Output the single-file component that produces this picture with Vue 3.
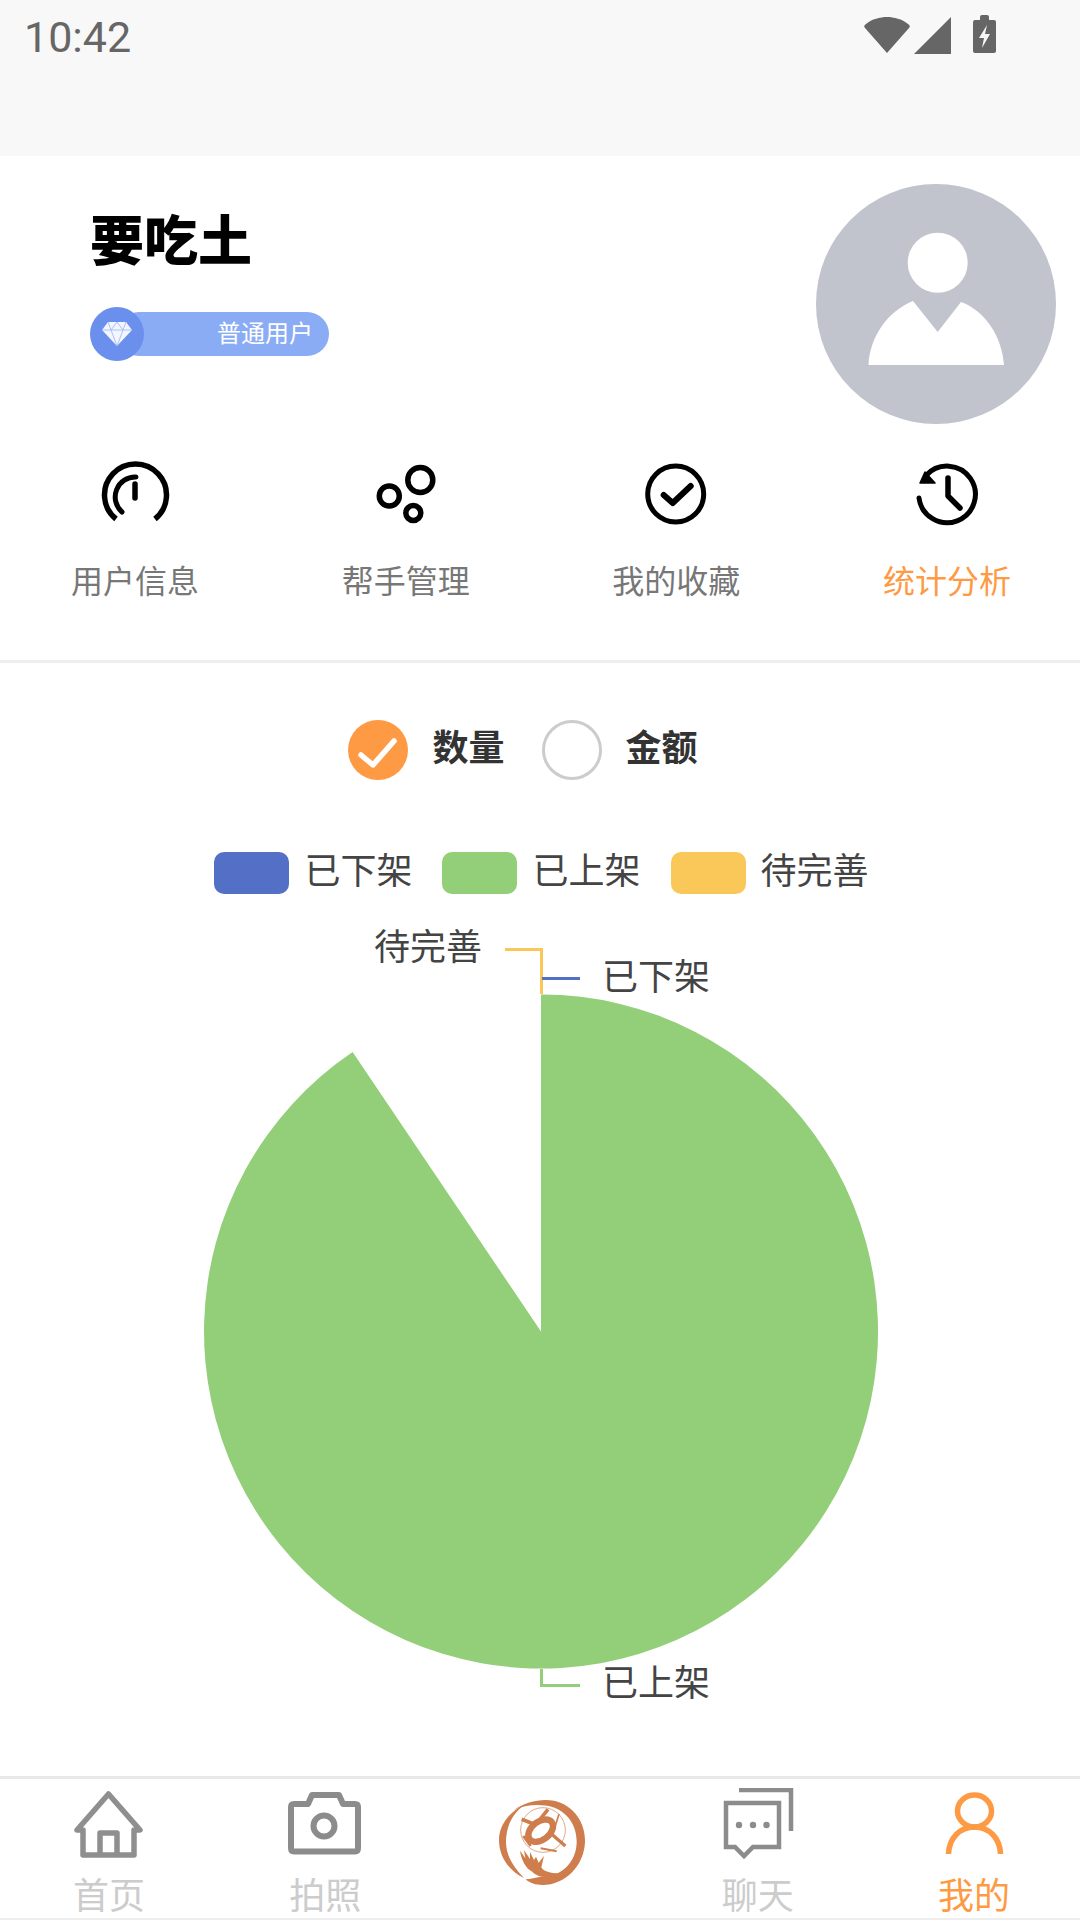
<script setup>
const legend = [
  { name: "已下架", color: "#5470c6" },
  { name: "已上架", color: "#93ce78" },
  { name: "待完善", color: "#fac858" },
];
</script>

<template>
  <div class="page">
    <div class="status-bar">
      <span class="time">10:42</span>
      <svg class="status-icons" viewBox="860 10 140 48" width="140" height="48">
        <path d="M887 53L865 28Q863 26 866 24C872 19 880 17 887 17C894 17 902 19 908 24Q911 26 909 28Z" fill="#666" />
        <path d="M914 54L951 17V54Z" fill="#666" />
        <path d="M980 20V17Q980 15 982 15H987Q989 15 989 17V20H994Q996 20 996 22V51Q996 53 994 53H975Q973 53 973 51V22Q973 20 975 20Z" fill="#666" />
        <path d="M987 25L979 38H984L982 48L990 34H985Z" fill="#f8f8f8" />
      </svg>
    </div>

    <div class="profile">
      <div class="profile-info">
        <div class="name">要吃土</div>
        <div class="badge">
          <div class="badge-icon">
            <svg viewBox="0 0 32 26" width="32" height="26">
              <path d="M7 1H25L31 9L16 25L1 9Z" fill="#fff" opacity="0.92" />
              <path d="M1 9H31M10 9L16 25L22 9L16 1L10 9M7 1L10 9M25 1L22 9" fill="none" stroke="#a9c0f5" stroke-width="1" />
            </svg>
          </div>
          <div class="badge-label">普通用户</div>
        </div>
      </div>
      <svg class="avatar" viewBox="816 183 240 240" width="240" height="240">
        <circle cx="936" cy="303" r="120" fill="#c1c4cc" />
        <circle cx="937.700" cy="261.700" r="30" fill="#fff" />
        <path d="M868.500 364C870 335 888 310 913 300L937.700 331L961 301C985 310 1002 335 1004 364Z" fill="#fff" />
      </svg>
    </div>

    <div class="menu">
      <div class="menu-item">
        <svg viewBox="95 458 80 72" width="80" height="72" fill="none" stroke="#000" stroke-linecap="round">
          <path d="M116 518A31 31 0 1 1 155 518" stroke-width="5.500" stroke-linecap="butt" />
          <path d="M122 511A20 20 0 0 1 136 476" stroke-width="5" />
          <path d="M135 483V497" stroke-width="5.500" />
        </svg>
        <span>用户信息</span>
      </div>
      <div class="menu-item">
        <svg viewBox="365.700 458 80 72" width="80" height="72" fill="none" stroke="#000" stroke-width="5.500">
          <circle cx="420" cy="479" r="12.500" />
          <circle cx="389" cy="495" r="10" />
          <circle cx="413" cy="512" r="7.500" />
        </svg>
        <span>帮手管理</span>
      </div>
      <div class="menu-item">
        <svg viewBox="636.300 458 80 72" width="80" height="72" fill="none" stroke="#000" stroke-width="5" stroke-linecap="round" stroke-linejoin="round">
          <circle cx="676" cy="493" r="28" />
          <path d="M664 494L673 502L691 485" stroke-width="6" />
        </svg>
        <span>我的收藏</span>
      </div>
      <div class="menu-item active">
        <svg viewBox="907 458 80 72" width="80" height="72" fill="none" stroke="#000" stroke-width="5" stroke-linecap="round" stroke-linejoin="round">
          <path d="M919 497A28.300 28.300 0 1 0 926 474.500" />
          <path d="M920 482L925 471L935 482Z" fill="#000" stroke-width="1.500" />
          <path d="M948 477V495L960 507" stroke-width="5.500" />
        </svg>
        <span>统计分析</span>
      </div>
    </div>

    <div class="filters">
      <div class="filter">
        <svg viewBox="0 0 60 60" width="60" height="60">
          <circle cx="30" cy="30" r="30" fill="#fd9a43" />
          <path d="M13 35L25 45L46 21" fill="none" stroke="#fff" stroke-width="5.500" stroke-linecap="round" stroke-linejoin="round" />
        </svg>
        <span>数量</span>
      </div>
      <div class="filter">
        <svg viewBox="0 0 60 60" width="60" height="60">
          <circle cx="30" cy="30" r="28.500" fill="#fff" stroke="#ccc" stroke-width="3" />
        </svg>
        <span>金额</span>
      </div>
    </div>

    <div class="legend">
      <div v-for="item in legend" :key="item.name" class="legend-item">
        <i class="swatch" :style="{ background: item.color }"></i>
        <span>{{ item.name }}</span>
      </div>
    </div>

    <svg class="chart" viewBox="0 894 1080 882" width="1080" height="882">
      <path d="M541 1331.500L541 994.500A337 337 0 1 1 352.600 1052.100Z" fill="#93ce78" />
      <path d="M505 949.500H541.500V994" fill="none" stroke="#fac858" stroke-width="3" />
      <path d="M542 978.500H580" fill="none" stroke="#5470c6" stroke-width="3" />
      <path d="M541.500 1669V1685.500H580" fill="none" stroke="#93ce78" stroke-width="3" />
      <text x="374" y="960">待完善</text>
      <text x="602" y="990">已下架</text>
      <text x="602" y="1696">已上架</text>
    </svg>

    <div class="tabbar">
      <div class="tab">
        <svg viewBox="69 1788 80 72" width="80" height="72" fill="none" stroke="#8f8f8f" stroke-width="5.500" stroke-linejoin="round">
          <path d="M83 1855V1830H77L108.500 1794L140 1830H134V1855Z" />
          <path d="M100 1855V1833H117V1855" />
        </svg>
        <span>首页</span>
      </div>
      <div class="tab">
        <svg viewBox="285 1788 80 72" width="80" height="72" fill="none" stroke="#8c8c8c" stroke-width="6" stroke-linejoin="round">
          <path d="M294 1804H308L312 1795H339L343 1804H355Q358 1804 358 1807V1848Q358 1851.500 355 1851.500H294Q291 1851.500 291 1848V1807Q291 1804 294 1804Z" />
          <circle cx="324" cy="1826" r="10.500" />
        </svg>
        <span>拍照</span>
      </div>
      <div class="tab logo-tab">
        <svg viewBox="4 0 300 300" width="100" height="100" fill="#cf7d4c">
          <path d="M70 60C105 35 150 25 190 32C250 45 285 100 283 155C281 225 225 285 155 285C135 285 118 280 105 268C120 268 135 262 150 260C212 263 258 215 258 155C258 100 225 58 170 47C135 42 100 45 70 60Z" />
          <path d="M105 42C55 65 25 105 25 150C25 195 50 240 100 264C78 240 46 205 46 155C46 110 65 70 105 42Z" />
          <circle cx="157" cy="120" r="67" fill="none" stroke="#cf7d4c" stroke-width="2" />
          <g fill="none" stroke="#cf7d4c">
            <ellipse cx="150" cy="122" rx="42" ry="27" transform="rotate(-38 150 122)" stroke-width="19" />
            <path d="M93 88L135 104" stroke-width="11" />
            <path d="M172 58L148 88" stroke-width="11" />
            <path d="M180 130L224 168" stroke-width="10" />
            <path d="M120 168L98 138" stroke-width="8" />
            <path d="M150 175L198 184" stroke-width="6" />
            <path d="M205 72L190 120" stroke-width="5" />
          </g>
          <path d="M88 182L104 205L100 180L118 207L118 186L130 210L136 200L144 218L160 198L152 232C158 245 180 250 205 250C175 268 140 262 125 245C105 235 92 210 88 182Z" />
        </svg>
      </div>
      <div class="tab">
        <svg viewBox="717 1788 80 72" width="80" height="72" fill="none" stroke="#8c8c8c" stroke-width="4.500">
          <path d="M738 1790H790V1831" />
          <path d="M725 1803H778V1847H752L743 1856L734 1847H725Z" />
          <g fill="#8c8c8c" stroke="none">
            <circle cx="738" cy="1825" r="3.200" />
            <circle cx="752" cy="1825" r="3.200" />
            <circle cx="765.500" cy="1825" r="3.200" />
          </g>
        </svg>
        <span>聊天</span>
      </div>
      <div class="tab active">
        <svg viewBox="934 1788 80 72" width="80" height="72" fill="none" stroke="#fd9a43" stroke-width="5.500">
          <ellipse cx="974.500" cy="1811" rx="17" ry="16" />
          <path d="M948.500 1854C949 1838 960 1827 974.500 1827C989 1827 1000 1838 1000.500 1854" />
        </svg>
        <span>我的</span>
      </div>
    </div>
  </div>
</template>

<style scoped>
.page {
  width: 1080px;
  height: 1920px;
  overflow: hidden;
  background: #fff;
  display: flex;
  flex-direction: column;
  font-family: "Noto Sans CJK SC", "Noto Sans", sans-serif;
}

.status-bar {
  height: 156px;
  flex: none;
  background: #f8f8f8;
  position: relative;
  padding-left: 24px;
  box-sizing: border-box;
}

.time {
  display: block;
  font-family: Roboto, sans-serif;
  font-size: 43px;
  line-height: 74px;
  color: #666;
}

.status-icons {
  position: absolute;
  left: 860px;
  top: 10px;
}

.profile {
  height: 304px;
  flex: none;
  display: flex;
  justify-content: space-between;
  box-sizing: border-box;
  padding: 28px 24px 0 90px;
}

.name {
  font-size: 54px;
  font-weight: 900;
  line-height: 60px;
  color: #000;
  margin: 24px 0 39px 0;
}

.badge {
  display: flex;
  align-items: center;
  width: 239px;
}

.badge-icon {
  width: 54px;
  height: 54px;
  flex: none;
  border-radius: 50%;
  background: #6a8fec;
  display: flex;
  align-items: center;
  justify-content: center;
  position: relative;
}

.badge-label {
  flex: 1;
  height: 44px;
  margin-left: -27px;
  padding-right: 16px;
  border-radius: 22px;
  background: #8aacf5;
  color: #fff;
  font-size: 24px;
  line-height: 40px;
  text-align: right;
}

.menu {
  height: 203px;
  flex: none;
  display: flex;
  justify-content: space-between;
  box-sizing: border-box;
  padding: 0 69px 0 71px;
  border-bottom: 3px solid #eee;
}

.menu-item {
  width: 128px;
  display: flex;
  flex-direction: column;
  align-items: center;
  font-size: 32px;
  line-height: 40px;
  color: #777;
}

.menu-item svg {
  flex: none;
  margin-bottom: 27.5px;
  margin-top: -1px;
}

.menu-item.active {
  color: #fd9a43;
}

.filters {
  flex: none;
  display: flex;
  justify-content: center;
  gap: 37px;
  padding: 57px 34px 0 0;
  height: 132px;
}

.filter {
  display: flex;
  align-items: center;
  gap: 24px;
  height: 60px;
  font-size: 36px;
  font-weight: 700;
  color: #333;
}

.filter span,
.legend-item span {
  margin-bottom: 10px;
}

.legend {
  flex: none;
  display: flex;
  justify-content: center;
  gap: 30px;
  height: 42px;
  padding-left: 3px;
}

.legend-item {
  display: flex;
  align-items: center;
  gap: 15px;
  font-size: 36px;
  color: #444;
}

.swatch {
  display: block;
  width: 75px;
  height: 42px;
  border-radius: 10px;
}

.chart {
  display: block;
  flex: none;
}

.chart text {
  font-size: 36px;
  fill: #444;
}

.tabbar {
  flex: none;
  height: 144px;
  box-sizing: border-box;
  display: flex;
  justify-content: space-between;
  padding: 9px 63px 0 66px;
  border-top: 3px solid #e8e8e8;
  border-bottom: 2px solid #eee;
}

.tab {
  width: 86px;
  display: flex;
  flex-direction: column;
  align-items: center;
  font-size: 36px;
  line-height: 40px;
  color: #ccc;
}

.tab svg {
  flex: none;
  margin-bottom: 13px;
}

.logo-tab svg {
  margin-top: 2px;
}

.tab.active {
  color: #fd9a43;
}
</style>

<style>
html,
body {
  margin: 0;
  background: #fff;
}
</style>
